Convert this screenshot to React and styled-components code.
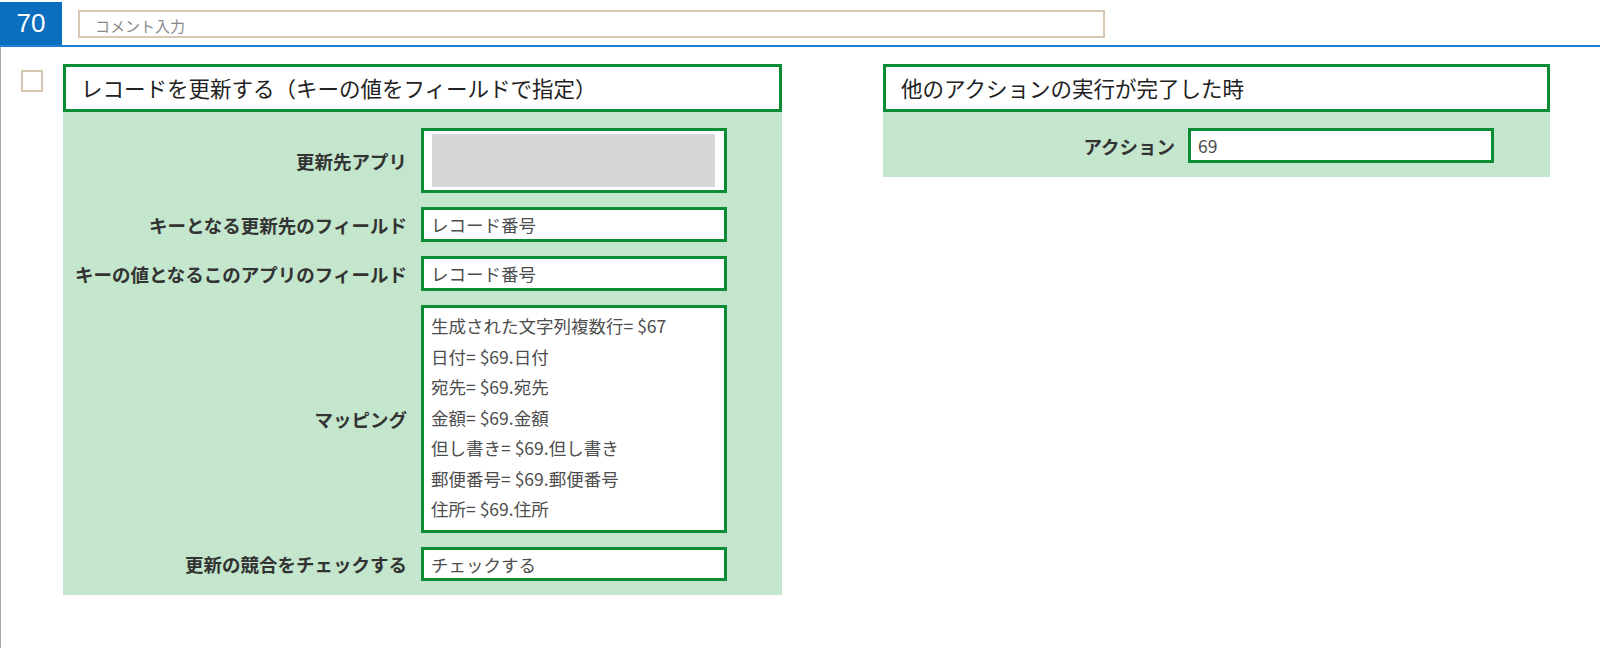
import styled, { createGlobalStyle } from "styled-components";

const GlobalStyle = createGlobalStyle`
    html, body {
        margin: 0;
        padding: 0;
        background: #ffffff;
        font-family: 'Noto Sans CJK JP', 'Noto Sans', sans-serif;
    }
`;

const Page = styled.div`
    width: 1600px;
    height: 648px;
    overflow: hidden;
    display: flex;
    flex-direction: column;
`;

const Header = styled.div`
    display: flex;
    align-items: flex-start;
    height: 45px;
    border-bottom: 2px solid #1f7fd4;
`;

const NumberBadge = styled.div`
    width: 62px;
    height: 43px;
    margin-top: 2px;
    background: #0b6ebf;
    color: #ffffff;
    font-family: 'Liberation Sans', Arial, sans-serif;
    font-size: 26px;
    display: flex;
    align-items: center;
    justify-content: center;
`;

const CommentInput = styled.input`
    box-sizing: border-box;
    width: 1027px;
    height: 28px;
    margin: 10px 0 0 16px;
    border: 2px solid #d9c9b4;
    padding: 3px 15px 0;
    font-family: 'Noto Sans CJK JP', sans-serif;
    font-size: 15px;
    outline: none;
    &::placeholder {
        color: #8a8a8a;
    }
`;

const Main = styled.div`
    flex: 1;
    display: flex;
    align-items: flex-start;
    border-left: 1px solid #a8a8a8;
    padding-top: 17px;
`;

const CheckBox = styled.div`
    box-sizing: border-box;
    width: 22px;
    height: 22px;
    margin: 6px 0 0 20px;
    border: 2px solid #d6c5b0;
    background: #fff;
`;

const Card = styled.section`
    width: ${(p) => p.$width}px;
    margin-left: ${(p) => p.$gap}px;
`;

const CardTitle = styled.div`
    box-sizing: border-box;
    height: 48px;
    border: 3px solid #0b8c35;
    padding: 0 0 2px 15px;
    display: flex;
    align-items: center;
    font-size: 21.5px;
    color: #222;
    background: #fff;
`;

const CardBody = styled.div`
    background: #c3e6cc;
    padding: 16px 0 14px;
    display: grid;
    grid-template-columns: ${(p) => p.$label}px 306px;
    column-gap: ${(p) => p.$colGap}px;
    row-gap: 14px;
    align-items: center;
`;

const Label = styled.div`
    text-align: right;
    font-weight: 700;
    font-size: 18.5px;
    color: #333;
    white-space: nowrap;
`;

const Field = styled.div`
    box-sizing: border-box;
    height: ${(p) => p.$h || 35}px;
    border: 3px solid #0b8c35;
    background: #fff;
    padding: 0 7px;
    display: flex;
    align-items: center;
    font-size: 17.5px;
    color: #4d4d4d;
    white-space: nowrap;
`;

const AppField = styled(Field)`
    padding: 3px 9px 3px 8px;
    align-items: stretch;
`;

const GrayFill = styled.div`
    flex: 1;
    background: #d6d6d6;
`;

const MappingField = styled(Field)`
    display: block;
    padding: 3px 7px;
    line-height: 30.5px;
`;

const mappings = [
    "生成された文字列複数行= $67",
    "日付= $69.日付",
    "宛先= $69.宛先",
    "金額= $69.金額",
    "但し書き= $69.但し書き",
    "郵便番号= $69.郵便番号",
    "住所= $69.住所",
];

export default function App() {
    return (
        <Page>
            <GlobalStyle />
            <Header>
                <NumberBadge>70</NumberBadge>
                <CommentInput placeholder="コメント入力" />
            </Header>
            <Main>
                <CheckBox />
                <Card $width={719} $gap={20}>
                    <CardTitle>レコードを更新する（キーの値をフィールドで指定）</CardTitle>
                    <CardBody $label={344} $colGap={14}>
                        <Label>更新先アプリ</Label>
                        <AppField $h={65}>
                            <GrayFill />
                        </AppField>
                        <Label>キーとなる更新先のフィールド</Label>
                        <Field>レコード番号</Field>
                        <Label>キーの値となるこのアプリのフィールド</Label>
                        <Field>レコード番号</Field>
                        <Label>マッピング</Label>
                        <MappingField $h={228}>
                            {mappings.map((m) => (
                                <div key={m}>{m}</div>
                            ))}
                        </MappingField>
                        <Label>更新の競合をチェックする</Label>
                        <Field $h={34}>チェックする</Field>
                    </CardBody>
                </Card>
                <Card $width={667} $gap={101}>
                    <CardTitle>他のアクションの実行が完了した時</CardTitle>
                    <CardBody $label={292} $colGap={13}>
                        <Label>アクション</Label>
                        <Field>69</Field>
                    </CardBody>
                </Card>
            </Main>
        </Page>
    );
}
